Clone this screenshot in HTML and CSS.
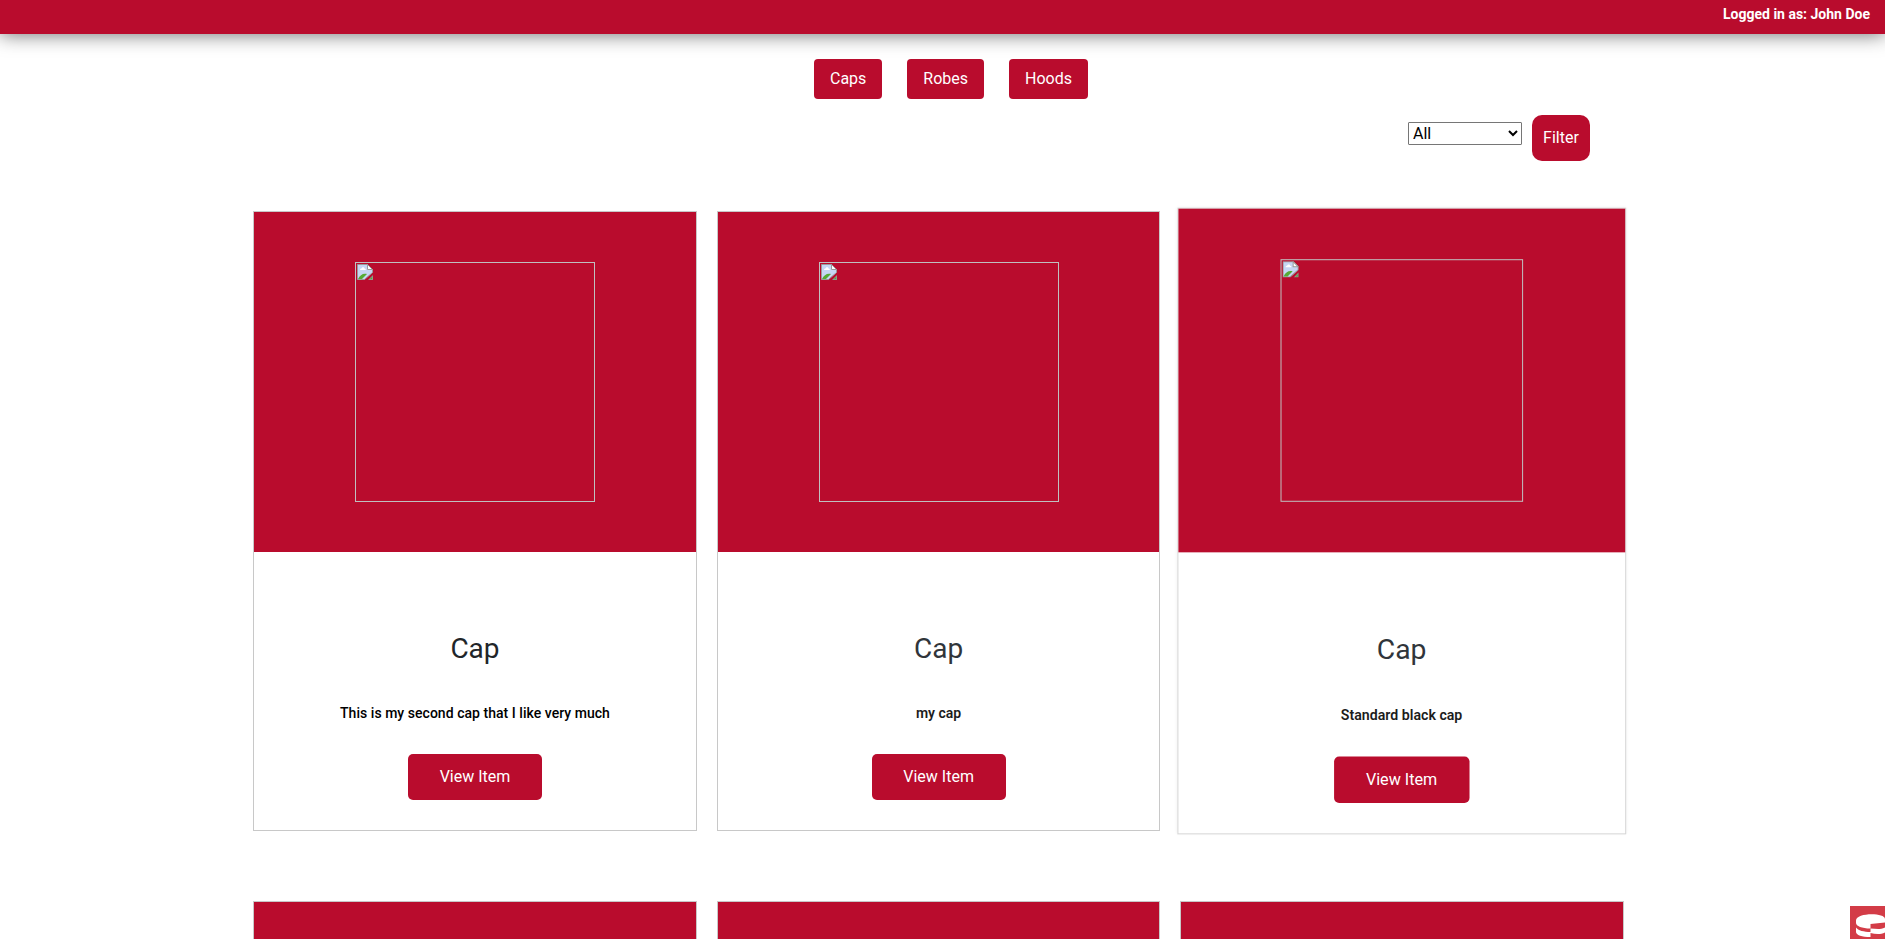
FILE: index.html
```html
<!DOCTYPE html>
<html lang="en">
<head>
<meta charset="utf-8">
<title>Caps</title>
<link rel="stylesheet" href="styles.css">
</head>
<body>
<header class="topbar">Logged in as: John Doe</header>
<nav class="categories">
  <a class="category">Caps</a>
  <a class="category">Robes</a>
  <a class="category">Hoods</a>
</nav>
<form class="filter">
  <select class="filter-select"><option>All</option></select>
  <button class="filter-button" type="button">Filter</button>
</form>
<svg width="0" height="0" class="defs">
  <symbol id="broken" viewBox="0 0 16 16">
    <path d="M.5 15.500V.5h10l5 5v3l-8 7z" fill="#c6d6f4" stroke="#9b9b9b"/>
    <path d="M1 15c2-4 5-6 9-5l-5 5z" fill="#55ab35"/>
    <path d="M3 6c0-1.300 1-1.500 1.500-1.500C5 2.500 7.500 3 7.500 4.500 9 4.500 9 6 8.500 6z" fill="#fff"/>
    <path d="M10.500.5v5h5z" fill="#fff" stroke="#9b9b9b"/>
    <path d="M16 11v5h-5z" fill="#8b9b8b"/><path d="M15 13v2h-2z" fill="#55ab35"/>
  </symbol>
</svg>
<main class="grid">
  <article class="card">
    <div class="media"><div class="photo"><svg class="broken"><use href="#broken"/></svg></div></div>
    <h2 class="title">Cap</h2>
    <p class="text">This is my second cap that I like very much</p>
    <a class="view">View Item</a>
  </article>
  <article class="card settling">
    <div class="media"><div class="photo"><svg class="broken"><use href="#broken"/></svg></div></div>
    <h2 class="title">Cap</h2>
    <p class="text">my cap</p>
    <a class="view">View Item</a>
  </article>
  <article class="card raised">
    <div class="media"><div class="photo"><svg class="broken"><use href="#broken"/></svg></div></div>
    <h2 class="title">Cap</h2>
    <p class="text">Standard black cap</p>
    <a class="view">View Item</a>
  </article>
  <article class="card"><div class="media"></div></article>
  <article class="card"><div class="media"></div></article>
  <article class="card"><div class="media"></div></article>
</main>
<div class="debug">
  <svg width="35" height="33" viewBox="0 0 35 33">
    <path d="M6 14.500C6 6.500 35 6.500 35 13v3.500l-14.500 1.500v4.500C12 22.500 6 20 6 17z" fill="#fff"/>
    <path d="M6 21.500c2 3 8 4.500 14.500 4.500v5C12 31 6 29 6 26zM20.500 22.500c5 0 9 1.500 14.500-1v5c-5 2.500-10 1.500-14.500 .5z" fill="#fff"/>
  </svg>
</div>
</body>
</html>
```
FILE: styles.css
```css
* { box-sizing: border-box; }
html, body { height: 100%; }
body {
  margin: 0;
  overflow: hidden;
  background: #fff;
  color: #212529;
  font-family: Roboto, sans-serif;
  font-size: 16px;
}
.defs { position: absolute; }
.topbar {
  height: 34px;
  padding: 6px 15px 0;
  background: #b90c2d;
  box-shadow: 0 0 20px rgba(0, 0, 0, .6);
  color: #fff;
  font-size: 14px;
  font-weight: 700;
  line-height: 17px;
  text-align: right;
}
.categories {
  display: flex;
  justify-content: center;
  gap: 25px;
  padding: 25px 0 0 17px;
}
.category {
  height: 40px;
  padding: 0 16px;
  border-radius: 4px;
  background: #b90c2d;
  color: #fff;
  line-height: 39px;
}
.filter {
  display: flex;
  justify-content: flex-end;
  gap: 10px;
  padding: 16px 295px 0 0;
}
.filter-select {
  width: 114px;
  height: 23px;
  margin-top: 7px;
  border: 1px solid #767676;
  border-radius: 1px;
  background: #fff;
  color: #000;
  font: 16px Roboto, sans-serif;
}
.filter-button {
  width: 58px;
  height: 46px;
  padding: 0 0 2px;
  border: 0;
  border-radius: 10px;
  background: #b90c2d;
  color: #fff;
  font: 16px Roboto, sans-serif;
}
.grid {
  display: grid;
  grid-template-columns: repeat(3, 443.6px);
  grid-auto-rows: 620px;
  gap: 70px 20px;
  padding: 50px 0 0 253.2px;
}
.card {
  display: flex;
  flex-direction: column;
  align-items: center;
  border: 1px solid #c8c8c8;
  background: #fff;
}
.settling .title, .raised .title { color: #30353a; }
.settling .text, .raised .text {
  color: #1c1c1c;
  font-weight: 600;
  letter-spacing: 0;
}
.raised {
  transform: translateX(-.2px) scale(1.0108);
  border-color: #d6d6d6;
  box-shadow: 0 0 3px rgba(0, 0, 0, .07);
}
.media {
  align-self: stretch;
  display: flex;
  justify-content: center;
  height: 340px;
  padding-top: 50px;
  background: #b90c2d;
}
.photo {
  width: 240px;
  height: 240px;
  padding: 1px;
  border: 1px solid #c0c0c0;
}
.broken { display: block; width: 16px; height: 16px; }
.title {
  margin: 80px 0 0;
  font-size: 28px;
  font-weight: 400;
  line-height: 34px;
}
.text {
  margin: 39px 0 0;
  color: #000;
  font-size: 14px;
  font-weight: 500;
  letter-spacing: .035px;
  line-height: 17px;
}
.view {
  width: 134px;
  height: 46px;
  margin-top: 32px;
  border-radius: 5px;
  background: #b90c2d;
  color: #fff;
  line-height: 45px;
  text-align: center;
}
.debug {
  position: fixed;
  right: 0;
  bottom: 0;
  width: 35px;
  height: 33px;
  background: #d33c47;
}
```
